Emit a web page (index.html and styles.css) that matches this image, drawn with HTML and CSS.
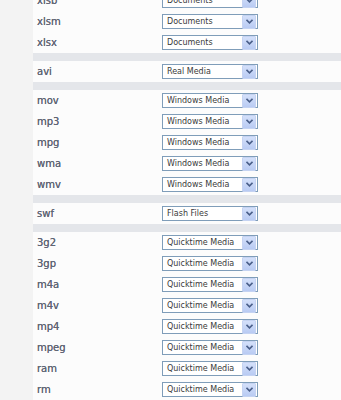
FILE: index.html
```html
<!DOCTYPE html>
<html lang="en">
<head>
    <meta charset="UTF-8">
    <title>File Types</title>
    <link rel="stylesheet" href="styles.css">
</head>
<body>
    <div class="page">
        <div class="types-panel">
            <div class="type-group">
                <div class="type-row"><span class="ext">xlsb</span><div class="select"><span class="select-text">Documents</span><span class="select-arrow"><svg width="7" height="5" viewBox="0 0 7 5"><path d="M0.5 0.8 L3.5 3.8 L6.5 0.8" fill="none" stroke="#4a5f8a" stroke-width="1.6"/></svg></span></div></div>
                <div class="type-row"><span class="ext">xlsm</span><div class="select"><span class="select-text">Documents</span><span class="select-arrow"><svg width="7" height="5" viewBox="0 0 7 5"><path d="M0.5 0.8 L3.5 3.8 L6.5 0.8" fill="none" stroke="#4a5f8a" stroke-width="1.6"/></svg></span></div></div>
                <div class="type-row"><span class="ext">xlsx</span><div class="select"><span class="select-text">Documents</span><span class="select-arrow"><svg width="7" height="5" viewBox="0 0 7 5"><path d="M0.5 0.8 L3.5 3.8 L6.5 0.8" fill="none" stroke="#4a5f8a" stroke-width="1.6"/></svg></span></div></div>
            </div>
            <div class="type-group">
                <div class="type-row"><span class="ext">avi</span><div class="select"><span class="select-text">Real Media</span><span class="select-arrow"><svg width="7" height="5" viewBox="0 0 7 5"><path d="M0.5 0.8 L3.5 3.8 L6.5 0.8" fill="none" stroke="#4a5f8a" stroke-width="1.6"/></svg></span></div></div>
            </div>
            <div class="type-group">
                <div class="type-row"><span class="ext">mov</span><div class="select"><span class="select-text">Windows Media</span><span class="select-arrow"><svg width="7" height="5" viewBox="0 0 7 5"><path d="M0.5 0.8 L3.5 3.8 L6.5 0.8" fill="none" stroke="#4a5f8a" stroke-width="1.6"/></svg></span></div></div>
                <div class="type-row"><span class="ext">mp3</span><div class="select"><span class="select-text">Windows Media</span><span class="select-arrow"><svg width="7" height="5" viewBox="0 0 7 5"><path d="M0.5 0.8 L3.5 3.8 L6.5 0.8" fill="none" stroke="#4a5f8a" stroke-width="1.6"/></svg></span></div></div>
                <div class="type-row"><span class="ext">mpg</span><div class="select"><span class="select-text">Windows Media</span><span class="select-arrow"><svg width="7" height="5" viewBox="0 0 7 5"><path d="M0.5 0.8 L3.5 3.8 L6.5 0.8" fill="none" stroke="#4a5f8a" stroke-width="1.6"/></svg></span></div></div>
                <div class="type-row"><span class="ext">wma</span><div class="select"><span class="select-text">Windows Media</span><span class="select-arrow"><svg width="7" height="5" viewBox="0 0 7 5"><path d="M0.5 0.8 L3.5 3.8 L6.5 0.8" fill="none" stroke="#4a5f8a" stroke-width="1.6"/></svg></span></div></div>
                <div class="type-row"><span class="ext">wmv</span><div class="select"><span class="select-text">Windows Media</span><span class="select-arrow"><svg width="7" height="5" viewBox="0 0 7 5"><path d="M0.5 0.8 L3.5 3.8 L6.5 0.8" fill="none" stroke="#4a5f8a" stroke-width="1.6"/></svg></span></div></div>
            </div>
            <div class="type-group">
                <div class="type-row"><span class="ext">swf</span><div class="select"><span class="select-text">Flash Files</span><span class="select-arrow"><svg width="7" height="5" viewBox="0 0 7 5"><path d="M0.5 0.8 L3.5 3.8 L6.5 0.8" fill="none" stroke="#4a5f8a" stroke-width="1.6"/></svg></span></div></div>
            </div>
            <div class="type-group">
                <div class="type-row"><span class="ext">3g2</span><div class="select"><span class="select-text">Quicktime Media</span><span class="select-arrow"><svg width="7" height="5" viewBox="0 0 7 5"><path d="M0.5 0.8 L3.5 3.8 L6.5 0.8" fill="none" stroke="#4a5f8a" stroke-width="1.6"/></svg></span></div></div>
                <div class="type-row"><span class="ext">3gp</span><div class="select"><span class="select-text">Quicktime Media</span><span class="select-arrow"><svg width="7" height="5" viewBox="0 0 7 5"><path d="M0.5 0.8 L3.5 3.8 L6.5 0.8" fill="none" stroke="#4a5f8a" stroke-width="1.6"/></svg></span></div></div>
                <div class="type-row"><span class="ext">m4a</span><div class="select"><span class="select-text">Quicktime Media</span><span class="select-arrow"><svg width="7" height="5" viewBox="0 0 7 5"><path d="M0.5 0.8 L3.5 3.8 L6.5 0.8" fill="none" stroke="#4a5f8a" stroke-width="1.6"/></svg></span></div></div>
                <div class="type-row"><span class="ext">m4v</span><div class="select"><span class="select-text">Quicktime Media</span><span class="select-arrow"><svg width="7" height="5" viewBox="0 0 7 5"><path d="M0.5 0.8 L3.5 3.8 L6.5 0.8" fill="none" stroke="#4a5f8a" stroke-width="1.6"/></svg></span></div></div>
                <div class="type-row"><span class="ext">mp4</span><div class="select"><span class="select-text">Quicktime Media</span><span class="select-arrow"><svg width="7" height="5" viewBox="0 0 7 5"><path d="M0.5 0.8 L3.5 3.8 L6.5 0.8" fill="none" stroke="#4a5f8a" stroke-width="1.6"/></svg></span></div></div>
                <div class="type-row"><span class="ext">mpeg</span><div class="select"><span class="select-text">Quicktime Media</span><span class="select-arrow"><svg width="7" height="5" viewBox="0 0 7 5"><path d="M0.5 0.8 L3.5 3.8 L6.5 0.8" fill="none" stroke="#4a5f8a" stroke-width="1.6"/></svg></span></div></div>
                <div class="type-row"><span class="ext">ram</span><div class="select"><span class="select-text">Quicktime Media</span><span class="select-arrow"><svg width="7" height="5" viewBox="0 0 7 5"><path d="M0.5 0.8 L3.5 3.8 L6.5 0.8" fill="none" stroke="#4a5f8a" stroke-width="1.6"/></svg></span></div></div>
                <div class="type-row"><span class="ext">rm</span><div class="select"><span class="select-text">Quicktime Media</span><span class="select-arrow"><svg width="7" height="5" viewBox="0 0 7 5"><path d="M0.5 0.8 L3.5 3.8 L6.5 0.8" fill="none" stroke="#4a5f8a" stroke-width="1.6"/></svg></span></div></div>
            </div>
        </div>
    </div>
</body>
</html>
```

FILE: styles.css
```css
body, html {
    margin: 0;
    padding: 0;
    font-family: "DejaVu Sans", Verdana, sans-serif;
    background-color: #f3f3f3;
    height: 100%;
    overflow: hidden;
}
.page {
    padding-left: 33px;
}
.types-panel {
    background-color: #fcfcfc;
    margin-top: -10px;
}
.type-group {
    border-bottom: 8px solid #e4e6ea;
}
.type-row {
    display: flex;
    align-items: center;
    height: 21px;
    padding-left: 4px;
}
.ext {
    width: 125px;
    font-size: 10px;
    color: #5f6574;
    text-shadow: 0 0 0.4px #5f6574;
}
.select {
    display: flex;
    align-items: center;
    width: 94px;
    height: 13px;
    border: 1px solid #7f9db9;
    background-color: #ffffff;
}
.select-text {
    flex: 1;
    padding-left: 4px;
    font-size: 8px;
    color: #3a3a3a;
}
.select-arrow {
    display: flex;
    align-items: center;
    justify-content: center;
    width: 12px;
    height: 12px;
    margin-right: 1px;
    background: linear-gradient(#d4e0fa, #b9cbf3);
    border: 0.5px solid #c5d3f2;
    border-radius: 1px;
}
```
